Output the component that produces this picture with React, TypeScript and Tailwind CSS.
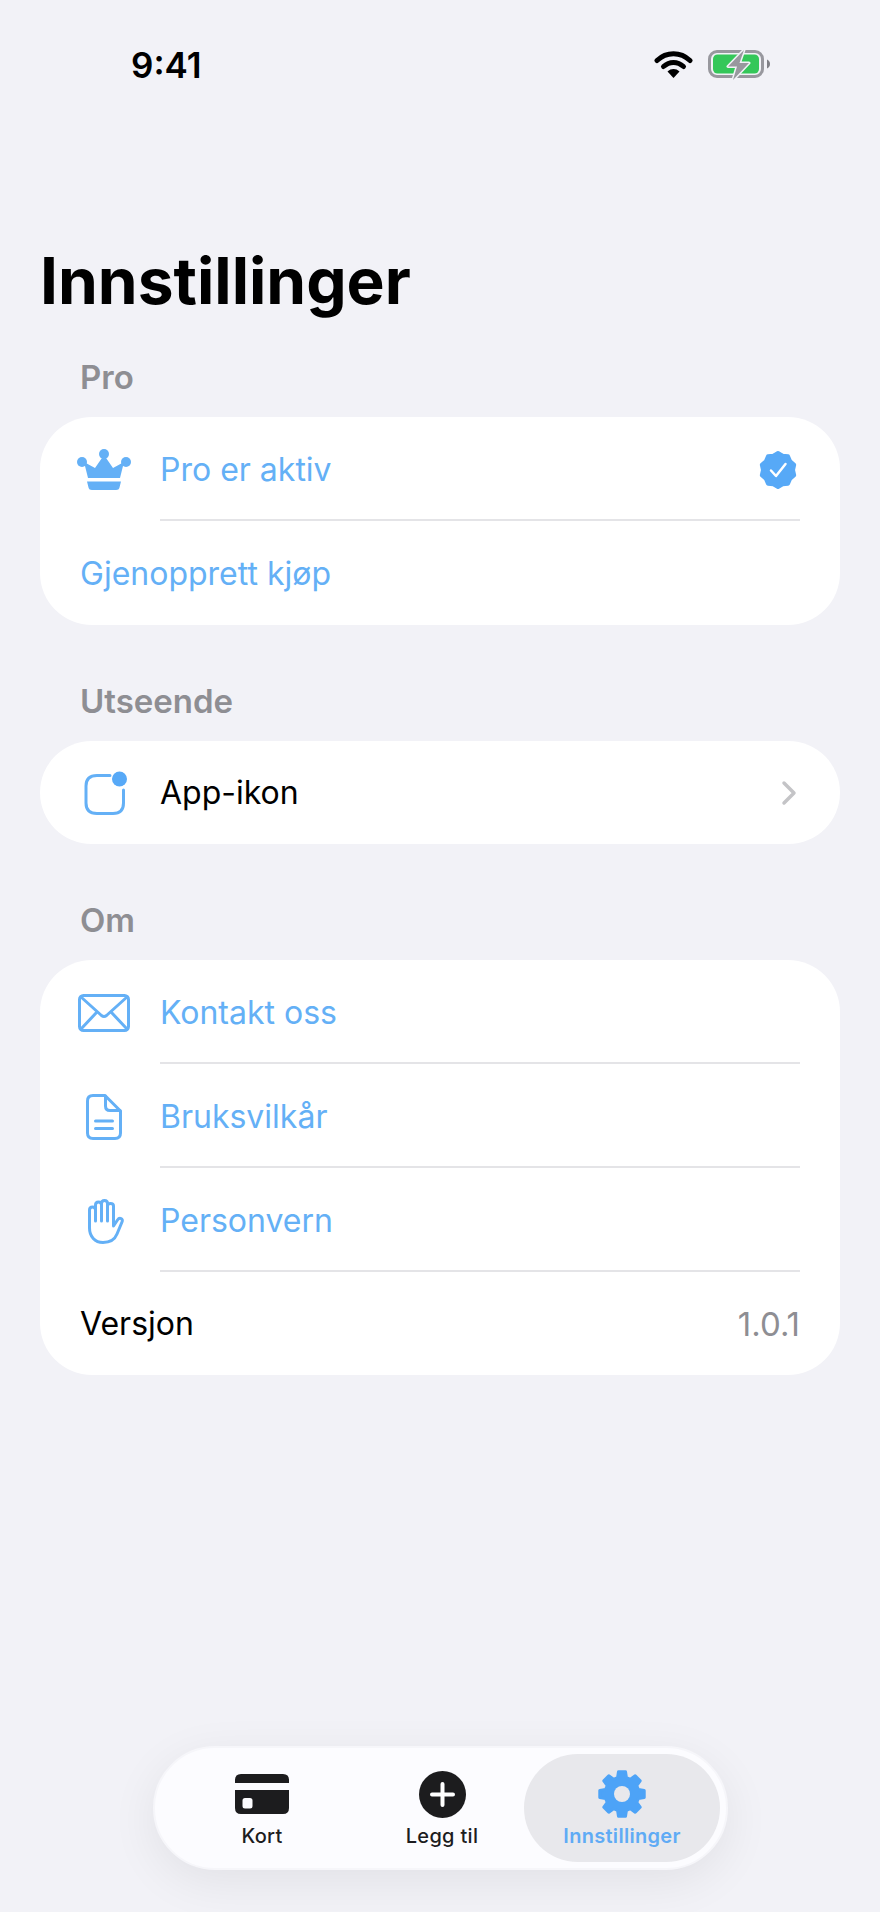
import { type ReactNode } from "react";

const blueText = "text-[#64b0f6]";

// builds a closed path from radius/angle pairs, used for the badge and the gear outline
function radial(cx: number, cy: number, points: [number, number][]) {
  return (
    points
      .map(([r, deg], i) => {
        const a = ((deg - 90) * Math.PI) / 180;
        return `${i ? "L" : "M"}${(cx + r * Math.cos(a)).toFixed(2)} ${(cy + r * Math.sin(a)).toFixed(2)}`;
      })
      .join("") + "Z"
  );
}

function StatusBar() {
  return (
    <div className="flex h-[130px] items-start justify-between pl-[131px] pr-[110px] pt-[42px]">
      <span className="text-[35px] leading-[46px] font-semibold text-black">9:41</span>
      <div className="mt-[7px] flex items-center gap-[15px]">
        <svg className="mb-[2px]" width="39" height="28" viewBox="0 0 39 28" fill="none">
          <path d="M3 10.5C12.5 1.5 26.5 1.5 36 10.5" stroke="#000" strokeWidth="5" strokeLinecap="round" />
          <path d="M9.5 16.5C15.5 11 23.5 11 29.5 16.5" stroke="#000" strokeWidth="5" strokeLinecap="round" />
          <path d="M19.5 28L13.5 21.5C17 18.2 22 18.2 25.500 21.500Z" fill="#000" />
        </svg>
        <svg width="62" height="32" viewBox="0 0 62 32" fill="none">
          <rect x="1.500" y="2.500" width="53" height="25" rx="7.500" stroke="#98989e" strokeWidth="3" />
          <rect x="5" y="5.500" width="46" height="19" rx="4.500" fill="#34c759" />
          <path d="M59 10.500c1.800.6 3 2.300 3 4.500s-1.200 3.900-3 4.500z" fill="#808086" />
          <path d="M36 1 20 17.500h9L25 31l16-17h-9.500z" fill="#98989e" stroke="#f2f2f7" strokeWidth="3" strokeLinejoin="round" paintOrder="stroke" />
        </svg>
      </div>
    </div>
  );
}

function Row({
  icon,
  label,
  labelClass = blueText,
  right,
  divider = false,
}: {
  icon?: ReactNode;
  label: string;
  labelClass?: string;
  right?: ReactNode;
  divider?: boolean;
}) {
  return (
    <div className="relative flex h-[103.75px] items-center px-[40px] pt-[2px]">
      {icon && <div className="flex w-[80px] shrink-0 items-center justify-center pr-[32px]">{icon}</div>}
      <span className={`flex-1 text-[32px] leading-[40px] ${labelClass}`}>{label}</span>
      {right}
      {divider && <div className="absolute bottom-0 left-[120px] right-[40px] h-[2px] bg-[#e4e4e7]" />}
    </div>
  );
}

function Section({ title, children }: { title: string; children: ReactNode }) {
  return (
    <section>
      <h2 className="mb-[20px] pl-[40px] text-[33px] leading-[40px] font-semibold text-[#8e8e93]">{title}</h2>
      <div className="overflow-hidden rounded-[52px] bg-white">{children}</div>
    </section>
  );
}

function Crown() {
  return (
    <svg className="shrink-0" width="54" height="41" viewBox="0 0 54 41" fill="#64b0f6">
      <circle cx="27" cy="5" r="5" />
      <circle cx="5" cy="13" r="5" />
      <circle cx="49" cy="13" r="5" />
      <path d="M27 6 36 19 47 13 43 29H11L7 13 18 19Z" />
      <path d="M10 32.500H44L42.500 38.500Q42 41 39 41H15Q12 41 11.500 38.500Z" />
    </svg>
  );
}

const badgePoints: [number, number][] = Array.from({ length: 20 }, (_, i) => [i % 2 ? 15 : 17, i * 18] as [number, number]);

function Badge() {
  return (
    <svg className="mr-[2px]" width="40" height="40" viewBox="0 0 40 40">
      <path d={radial(20, 20, badgePoints)} fill="#57a9f7" stroke="#57a9f7" strokeWidth="4" strokeLinejoin="round" />
      <path d="M13 20.500 18 26 27.500 14" fill="none" stroke="#fff" strokeWidth="2.500" strokeLinecap="round" strokeLinejoin="round" />
    </svg>
  );
}

function AppIcon() {
  return (
    <svg className="ml-[4px] shrink-0" width="44" height="44" viewBox="0 0 44 44" fill="none">
      <path d="M26 4.500H13Q2 4.500 2 15V32Q2 42.500 13 42.500H29Q39.500 42.500 39.500 32V19" stroke="#64b0f6" strokeWidth="3" strokeLinecap="round" />
      <circle cx="35.500" cy="8" r="7.500" fill="#57a9f7" />
    </svg>
  );
}

function Mail() {
  return (
    <svg className="shrink-0" width="52" height="38" viewBox="0 0 52 38" fill="none" stroke="#64b0f6" strokeWidth="3" strokeLinecap="round" strokeLinejoin="round">
      <rect x="1.500" y="1.500" width="49" height="35" rx="4" />
      <path d="M3 3 23.500 21.500Q26 23.500 28.500 21.500L49 3" />
      <path d="M3 35 18.500 18.500M49 35 33.500 18.500" />
    </svg>
  );
}

function Doc() {
  return (
    <svg className="shrink-0" width="36" height="46" viewBox="0 0 36 46" fill="none" stroke="#64b0f6" strokeWidth="3" strokeLinecap="round" strokeLinejoin="round">
      <path d="M7 1.500H19L34.500 17V39Q34.500 44.500 29 44.500H7Q1.500 44.500 1.500 39V7Q1.500 1.500 7 1.500Z" />
      <path d="M19.500 2V12Q19.500 16.500 24 16.500H34" />
      <path d="M9.500 27H26.500M9.500 34.500H26.500" />
    </svg>
  );
}

function Hand() {
  return (
    <svg className="ml-[3px] shrink-0" width="36" height="46" viewBox="0 0 36 46" fill="none" stroke="#64b0f6" strokeWidth="3" strokeLinecap="round" strokeLinejoin="round">
      <path d="M1.500 30V12C1.500 8 7.500 8 7.500 12V7C7.500 3 13.500 3 13.500 7V5.500C13.500 1.500 19.500 1.500 19.500 5.500V8C19.500 4.500 25.500 4.500 25.500 8V28L29.500 22C31.500 19 35.500 20.500 34 24L29 36C27 41 22 44.500 15 44.500C7 44.500 1.500 38.500 1.500 30Z" />
      <path d="M7.500 12V23M13.500 7V23M19.500 8V23" />
    </svg>
  );
}

function TabCard() {
  return (
    <svg width="54" height="40" viewBox="0 0 54 40" fill="#1c1c1e">
      <path d="M0 9V6Q0 0 6 0H48Q54 0 54 6V9Z" />
      <path fillRule="evenodd" d="M0 16H54V34Q54 40 48 40H6Q0 40 0 34ZM10 24Q7.500 24 7.500 26.500V32Q7.500 34.500 10 34.500H15Q17.500 34.500 17.500 32V26.500Q17.500 24 15 24Z" />
    </svg>
  );
}

function TabPlus() {
  return (
    <svg width="47" height="47" viewBox="0 0 47 47">
      <circle cx="23.500" cy="23.500" r="23.500" fill="#1c1c1e" />
      <path d="M23.500 13V34M13 23.500H34" stroke="#fff" strokeWidth="4" strokeLinecap="round" />
    </svg>
  );
}

const gearPoints: [number, number][] = Array.from({ length: 8 }, (_, i) => i * 45).flatMap((deg) => [
  [17, deg - 15],
  [22.500, deg - 9],
  [22.500, deg + 9],
  [17, deg + 15],
] as [number, number][]);

function TabGear() {
  return (
    <svg width="48" height="48" viewBox="0 0 48 48">
      <path d={radial(24, 24, gearPoints)} fill="#4da3f7" stroke="#4da3f7" strokeWidth="3" strokeLinejoin="round" />
      <circle cx="24" cy="24" r="8" fill="#e8e8ec" />
    </svg>
  );
}

function Tab({ icon, label, width, active = false }: { icon: ReactNode; label: string; width: string; active?: boolean }) {
  return (
    <div className={`flex h-[108px] flex-col items-center rounded-[54px] pt-[16px] ${width} ${active ? "bg-[#e8e8ec]" : ""}`}>
      <div className="flex h-[48px] items-center justify-center">{icon}</div>
      <span className={`mt-[6px] text-[20px] leading-[24px] tracking-[0.3px] ${active ? "font-semibold text-[#5fabf5]" : "font-medium text-[#1c1c1e]"}`}>{label}</span>
    </div>
  );
}

export default function App() {
  return (
    <div
      className="flex h-[1912px] w-[880px] flex-col overflow-hidden bg-[#f2f2f7]"
      style={{ fontFamily: "Inter, 'Liberation Sans', sans-serif" }}
    >
      <StatusBar />
      <div className="px-[40px]">
        <h1 className="mt-[110px] mb-[35px] h-[82px] text-[64px] leading-[82px] font-bold text-black">Innstillinger</h1>
        <Section title="Pro">
          <Row icon={<Crown />} label="Pro er aktiv" right={<Badge />} divider />
          <Row label="Gjenopprett kjøp" />
        </Section>
        <div className="h-[56px]" />
        <Section title="Utseende">
          <Row
            icon={<AppIcon />}
            label="App-ikon"
            labelClass="text-black"
            right={
              <svg className="mr-[3px]" width="16" height="26" viewBox="0 0 16 26" fill="none">
                <path d="M3 3 13 13 3 23" stroke="#c4c4c7" strokeWidth="3.500" strokeLinecap="round" strokeLinejoin="round" />
              </svg>
            }
          />
        </Section>
        <div className="h-[56px]" />
        <Section title="Om">
          <Row icon={<Mail />} label="Kontakt oss" divider />
          <Row icon={<Doc />} label="Bruksvilkår" divider />
          <Row icon={<Hand />} label="Personvern" divider />
          <Row label="Versjon" labelClass="text-black" right={<span className="text-[33px] text-[#8e8e93]">1.0.1</span>} />
        </Section>
      </div>
      <div className="mt-auto mb-[42px] flex justify-center">
        <nav className="ml-[1px] flex h-[124px] w-[575px] items-center rounded-[62px] border-[2px] border-[#f6f6fa] bg-[#fcfcff] pl-[9px] pr-[4px] shadow-[0_12px_48px_rgba(0,0,0,0.07)]">
          <Tab icon={<TabCard />} label="Kort" width="w-[196px]" />
          <Tab icon={<TabPlus />} label="Legg til" width="w-[164px]" />
          <Tab icon={<TabGear />} label="Innstillinger" width="w-[196px]" active />
        </nav>
      </div>
    </div>
  );
}
